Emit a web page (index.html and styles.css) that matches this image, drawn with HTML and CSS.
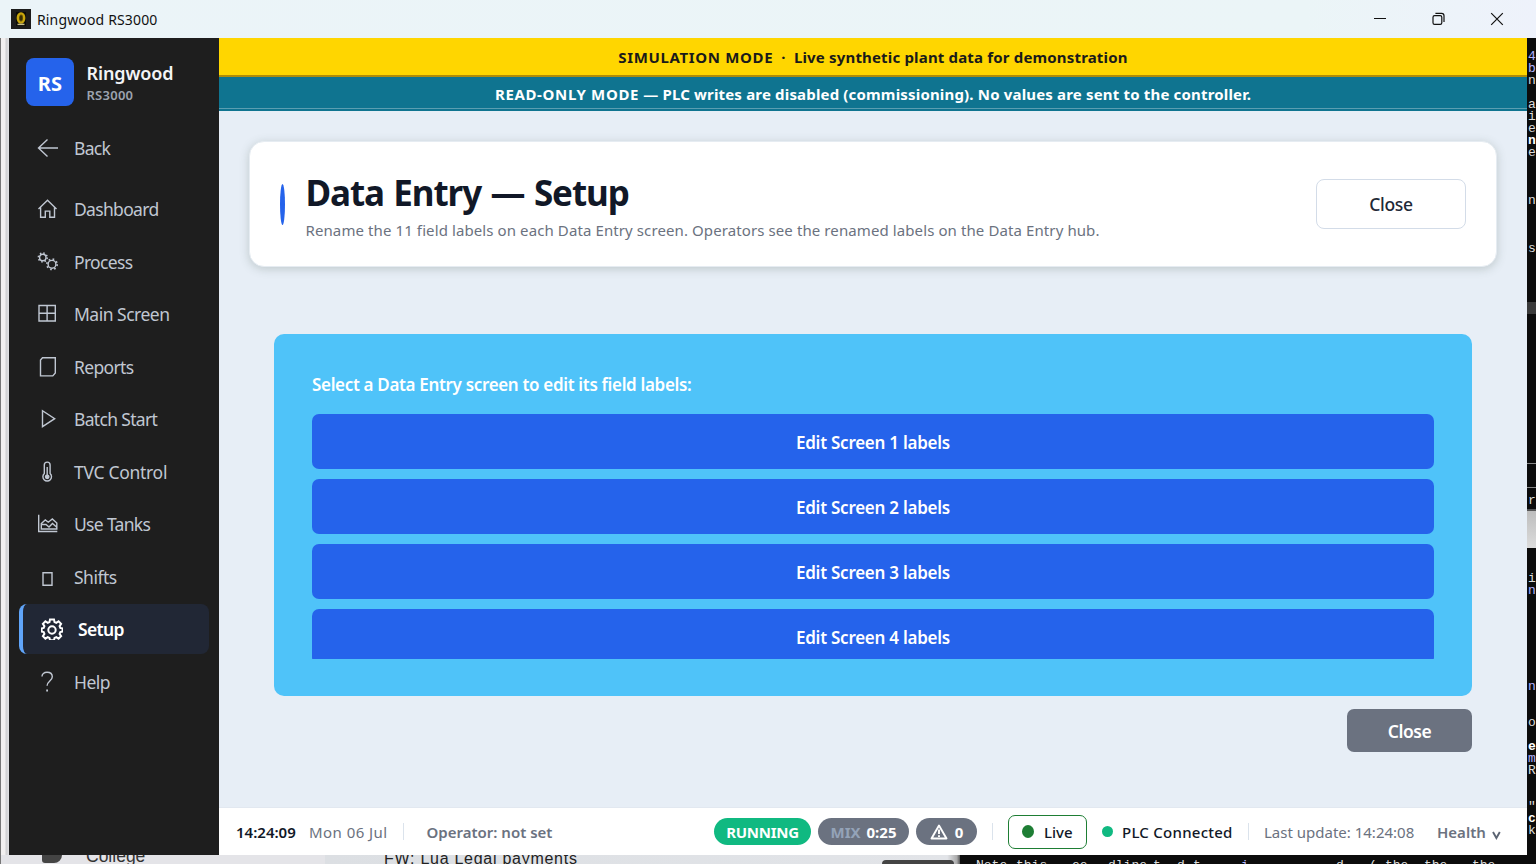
FILE: index.html
```
<!DOCTYPE html>
<html lang="en">
<head>
<meta charset="utf-8">
<title>Ringwood RS3000</title>
<link rel="stylesheet" href="styles.css">
</head>
<body>
<div class="screen">
  <header class="titlebar">
    <svg class="app-icon" width="20" height="20" viewBox="0 0 20 20"><rect width="20" height="20" fill="#1c1c1c"/><rect x="5" y="3" width="10" height="14" fill="#0c0c08"/><ellipse cx="10" cy="9" rx="3.2" ry="4.600" fill="#5a4a06" stroke="#c9a60c" stroke-width="2.400"/><path d="M10 7v4" stroke="#2c2404" stroke-width="1.400"/><path d="M6.500 15.400h7" stroke="#c9c08a" stroke-width="1.400"/></svg>
    <span class="app-title">Ringwood RS3000</span>
    <div class="window-buttons">
      <svg width="14" height="14" viewBox="0 0 14 14"><path d="M1 6.500h12" stroke="#111" fill="none"/></svg>
      <svg width="14" height="14" viewBox="0 0 14 14" fill="none" stroke="#111" stroke-width="1.200"><rect x="1" y="3.600" width="8.800" height="8.800" rx="1.600"/><path d="M3.400 1.400h6.200a2.400 2.400 0 0 1 2.400 2.400V10"/></svg>
      <svg width="14" height="14" viewBox="0 0 14 14"><path d="M1.200 1.200l11.600 11.600M12.800 1.200L1.200 12.800" stroke="#111" stroke-width="1.200" fill="none"/></svg>
    </div>
  </header>

  <div class="edge-left"></div>

  <div class="window">
    <aside class="sidebar">
      <div class="brand">
        <div class="logo">RS</div>
        <div class="brand-text"><div class="brand-name">Ringwood</div><div class="brand-model">RS3000</div></div>
      </div>
      <nav class="nav">
        <a class="item back"><svg viewBox="0 0 22 22"><path d="M21 11H1.500M10.500 2.500L1.500 11l9 8.500"/></svg><span class="tight">Back</span></a>
        <a class="item"><svg viewBox="0 0 22 22"><path d="M1.500 11L10.500 2.300 19.500 11M3.600 9.500v9.800h4.700v-6.200h4.500v6.200h4.700V9.500"/></svg><span class="tight">Dashboard</span></a>
        <a class="item"><svg viewBox="0 0 22 22"><circle cx="5.800" cy="6.500" r="3.200"/><circle cx="5.800" cy="6.500" r="4.400" stroke-width="1.600" stroke-dasharray="1.450 2"/><circle cx="15" cy="13.300" r="3.900"/><circle cx="15" cy="13.300" r="5.200" stroke-width="1.600" stroke-dasharray="1.700 2.380"/></svg><span class="tight">Process</span></a>
        <a class="item"><svg viewBox="0 0 22 22"><path d="M2 2.500h16.300v15.500H2zM10.100 2.500V18M2 10.200h16.300"/></svg><span class="medium">Main Screen</span></a>
        <a class="item"><svg viewBox="0 0 22 22"><path d="M5.500 1.700h12.800v15.200l-2.500 3H3.500V4z"/></svg><span class="tight">Reports</span></a>
        <a class="item"><svg viewBox="0 0 22 22"><path d="M5.500 2.700v16L17.700 10.700z"/></svg><span class="tight">Batch Start</span></a>
        <a class="item"><svg viewBox="0 0 22 22"><path d="M7.300 12.500V4a2.900 2.900 0 0 1 5.800 0v8.500a4.300 4.300 0 1 1-5.800 0z"/><path d="M10.200 6v8"/><circle cx="10.200" cy="15.800" r="1.700" fill="currentColor"/></svg><span class="loose">TVC Control</span></a>
        <a class="item"><svg viewBox="0 0 22 22"><path d="M1.700 1.700v16.800h18.600M4.300 16h15.500V10l-4.500-4-4 3.200-3-2.200-4 3.500zM4.500 11.500l4.500 0 3 2.500 3.500-3.500 4 3.500"/></svg><span class="tight">Use Tanks</span></a>
        <a class="item"><svg viewBox="0 0 22 22"><path d="M6 6.800h9v12.500H6z"/></svg><span class="medium">Shifts</span></a>
        <a class="item active"><svg viewBox="0 0 22 22"><path d="M9 1.400h4l.5 2.700 1.800.8 2.300-1.600 2.500 2.600-1.500 2.300.7 1.700 2.300.5v3.200l-2.300.5-.7 1.800 1.500 2.300-2.500 2.500-2.300-1.500-1.800.7-.5 2.300H9l-.5-2.300-1.800-.7-2.300 1.500-2.500-2.500 1.500-2.300-.7-1.800-2-.5v-3.200l2-.5.7-1.700L1.900 5.900l2.500-2.600 2.300 1.600 1.800-.8z"/><circle cx="11" cy="12" r="3.700"/></svg><span class="tight">Setup</span></a>
        <a class="item"><svg viewBox="0 0 22 22"><path d="M5 5.500C5 3 7 1.300 10 1.300s5.300 1.700 5.300 4.500c0 4.200-5.200 4.400-5.200 9"/><path d="M10.100 18.600v2" stroke-width="1.800"/></svg><span class="medium">Help</span></a>
      </nav>
    </aside>

    <main class="main">
      <div class="banner simulation"><span class="mode">SIMULATION MODE</span><span> &nbsp;·&nbsp; Live synthetic plant data for demonstration</span></div>
      <div class="banner readonly"><span class="mode">READ-ONLY MODE</span><span> — PLC writes are disabled (commissioning). No values are sent to the controller.</span></div>

      <section class="page">
        <div class="card">
          <div class="accent"></div>
          <div class="heading">
            <h1>Data Entry — Setup</h1>
            <p>Rename the 11 field labels on each Data Entry screen. Operators see the renamed labels on the Data Entry hub.</p>
          </div>
          <button class="close-light">Close</button>
        </div>
        <div class="panel">
          <div class="prompt"><span>Select a Data Entry screen to edit its field labels:</span></div>
          <div class="list">
            <button class="edit"><span>Edit Screen 1 labels</span></button>
            <button class="edit"><span>Edit Screen 2 labels</span></button>
            <button class="edit"><span>Edit Screen 3 labels</span></button>
            <button class="edit"><span>Edit Screen 4 labels</span></button>
          </div>
        </div>
        <button class="close-dark">Close</button>
      </section>

      <footer class="status">
        <span class="clock">14:24:09</span>
        <span class="date">Mon 06 Jul</span>
        <i class="sep sep-a"></i>
        <span class="operator">Operator: not set</span>
        <div class="right">
          <span class="pill running">RUNNING</span>
          <span class="pill mix"><em>MIX</em> 0:25</span>
          <span class="pill alarm"><svg width="18" height="16" viewBox="0 0 18 16" fill="none" stroke="#fff" stroke-width="1.900"><path d="M9 1.500L16.500 14.500h-15z" stroke-linejoin="round"/><path d="M9 5.500v4.500M9 11.300v1.700"/></svg>0</span>
          <i class="sep sep-b"></i>
          <span class="live"><i class="dot"></i>Live</span>
          <i class="dot plc-dot"></i>
          <span class="plc">PLC Connected</span>
          <i class="sep sep-c"></i>
          <span class="update">Last update: 14:24:08</span>
          <span class="health">Health</span>
          <svg class="chev" width="9" height="9" viewBox="0 0 9 9"><path d="M1 1l3.400 6L7.800 1" fill="none" stroke="#5b6472" stroke-width="1.900"/></svg>
        </div>
      </footer>
    </main>
  </div>

  <div class="edge-right">
    <b class="blue" style="top:50px">4</b><b class="blue" style="top:62px">b</b><b style="top:74px">n</b><b style="top:98px">a</b><b style="top:110px">i</b><b style="top:122px">e</b><b class="white" style="top:134px">n</b><b style="top:146px">e</b><b style="top:194px">n</b><b style="top:242px">s</b>
    <i class="block"></i><i class="rule" style="top:463px"></i><i class="rule" style="top:487px"></i><b style="top:494px">r</b><i class="light"></i>
    <b style="top:572px">i</b><b class="blue" style="top:584px">n</b><b class="blue" style="top:680px">n</b><b style="top:716px">o</b><b class="white" style="top:740px">e</b><b class="blue" style="top:752px">m</b><b style="top:764px">R</b><b style="top:800px">"</b><b class="white" style="top:812px">c</b><b style="top:824px">k</b>
  </div>

  <div class="desk">
    <div class="mail-nav"><i class="folder"></i><span>College</span></div>
    <div class="mail-list"><span>FW: Lua Legal payments</span><i class="tab"></i></div>
    <div class="terminal"><span style="left:16px">Note</span><span style="left:56px">this</span><span style="left:112px">ee</span><span style="left:148px">dline</span><span style="left:193px">t</span><span style="left:217px">d</span><span style="left:233px">t</span><span class="blue" style="left:281px">i</span><span style="left:376px">d</span><span style="left:409px">(</span><span style="left:425px">the</span><span style="left:464px">the</span><span style="left:512px">the</span></div>
  </div>
</div>
</body>
</html>
```
FILE: styles.css
```
* { box-sizing: border-box; }
body { margin: 0; font-family: "Noto Sans", "Open Sans", sans-serif; overflow: hidden; }
button { font-family: inherit; padding: 0; margin: 0; }
span, h1, p { white-space: nowrap; }
.screen { width: 1536px; height: 864px; display: grid; grid-template-columns: 9px 1518px 9px; grid-template-rows: 38px 817px 9px; overflow: hidden; background: #0c0c0c; }

.titlebar { grid-column: 1 / 4; display: flex; align-items: center; padding: 0 25px 0 11px; background: linear-gradient(90deg, #ebf4f8, #ebf5f7 85%, #eef2fb); }
.app-title { font-size: 14px; color: #111; margin-left: 6px; letter-spacing: 0.15px; }
.window-buttons { margin-left: auto; display: flex; gap: 44.500px; padding-right: 7px; }

.edge-left { background: linear-gradient(90deg, #777 0 1px, #f2f0f0 1px 5px, #cfcfd1 6px, #e2e2e4 9px); }
.window { display: grid; grid-template-columns: 210px 1fr; }

.sidebar { background: #1e1e1e; padding: 20px 10px 0; }
.brand { display: flex; align-items: center; gap: 12.500px; padding-left: 7px; height: 48px; }
.logo { width: 48px; height: 48px; border-radius: 8px; background: #2563eb; color: #fff; font-weight: 700; font-size: 20px; line-height: 52px; text-align: center; letter-spacing: 0.2px; }
.brand-text { padding-top: 3px; }
.brand-name { color: #f3f4f6; font-size: 18px; font-weight: 600; line-height: 22px; letter-spacing: -0.1px; }
.brand-model { color: #9ca3af; font-size: 13px; font-weight: 600; line-height: 22px; letter-spacing: 0.25px; }
.nav { display: flex; flex-direction: column; gap: 2.500px; padding-top: 17px; }
.item { display: flex; align-items: center; height: 50px; padding-left: 18px; gap: 15px; border-radius: 8px; color: #c0c7d2; font-size: 17.500px; }
.item svg { width: 22px; height: 22px; flex: none; fill: none; stroke: currentColor; stroke-width: 1.400; }
.tight { letter-spacing: -0.67px; }
.medium { letter-spacing: -0.5px; }
.loose { letter-spacing: -0.3px; }
.back { margin-bottom: 8.500px; }
.active { background: #212735; border-left: 4px solid #60a5fa; color: #fff; font-weight: 600; }
.active svg { stroke-width: 2; }

.main { display: flex; flex-direction: column; background: #e7eef6; }
.banner { text-align: center; font-weight: 700; font-size: 15px; letter-spacing: 0.17px; }
.mode { letter-spacing: 0.65px; }
.simulation { height: 39px; line-height: 39px; background: #ffd600; color: #1a1a1a; border-bottom: 2px solid #b08c08; }
.readonly { height: 34px; line-height: 35px; background: linear-gradient(#0f7490 0 31px, #5a9eb1 31px 32px, #0f7490 32px); color: #fff; }

.page { flex: 1; display: flex; flex-direction: column; align-items: stretch; padding: 30px 30px 0; }
.card { display: flex; align-items: center; height: 126px; border-radius: 15px; background: #fff; border: 1px solid #e6ecf2; padding: 0 30px; box-shadow: 0 2px 10px rgba(70, 90, 80, .25); }
.accent { width: 5px; height: 41px; border-radius: 50%; background: #2563eb; }
.heading { margin-left: 20.500px; padding-top: 3px; }
h1 { margin: 0; font-size: 35px; line-height: 44px; font-weight: 700; color: #111827; letter-spacing: -1.1px; word-spacing: 1.500px; }
p { margin: 4px 0 0; font-size: 15px; line-height: 22px; color: #6b7280; letter-spacing: 0.1px; }
.close-light { margin-left: auto; width: 150px; height: 50px; border: 1px solid #d3dce8; border-radius: 8px; background: #fff; color: #1f2937; font-size: 17.500px; font-weight: 500; letter-spacing: -0.3px; }
.panel { height: 362px; margin: 67px 25px 0; padding: 37px 38px; border-radius: 10px; background: #4fc3f9; }
.prompt { height: 43px; line-height: 27px; color: #fff; font-size: 17px; font-weight: 600; letter-spacing: -0.33px; }
.list { height: 245px; overflow: hidden; display: flex; flex-direction: column; gap: 10px; }
.edit { flex: none; height: 55px; border: 0; border-radius: 7px; background: #2563eb; color: #fff; font-size: 17px; font-weight: 600; letter-spacing: -0.25px; padding-top: 2px; }
.close-dark { align-self: flex-end; width: 125px; height: 43px; margin: 13px 25px 0; border: 0; border-radius: 7px; background: #6b7280; color: #fff; font-size: 17.500px; font-weight: 600; letter-spacing: -0.5px; }

.status { height: 48px; display: flex; align-items: center; background: #fff; border-top: 1px solid #e2e8f0; padding-left: 17px; font-size: 15px; color: #6b7280; }
.clock { width: 73px; color: #111827; font-weight: 600; }
.date { width: 94px; letter-spacing: 0.45px; }
.sep { display: block; width: 1px; height: 17px; background: #dbe3ec; }
.operator { margin-left: 22.500px; font-weight: 600; }
.right { margin-left: auto; width: 813px; display: flex; align-items: center; }
.pill { display: flex; align-items: center; justify-content: center; height: 27px; border-radius: 14px; color: #fff; font-weight: 700; }
.pill em { font-style: normal; color: #94a3b8; margin-right: 6px; }
.running { width: 97px; background: #10b981; letter-spacing: -0.25px; }
.mix { width: 91px; margin-left: 7px; background: #6b7280; }
.alarm { width: 61px; margin-left: 7px; background: #6b7280; gap: 7px; }
.sep-b { margin-left: 15px; }
.live { width: 79px; height: 34px; margin-left: 15px; border: 1px solid #1e7e34; border-radius: 7px; display: flex; align-items: center; padding-left: 13px; color: #111827; font-weight: 500; }
.dot { display: block; width: 12px; height: 13px; border-radius: 50%; background: #1e7e34; margin-right: 10px; }
.plc-dot { width: 11px; height: 11px; margin: 0 9px 0 15px; background: #10b981; }
.plc { color: #111827; font-weight: 500; width: 126px; letter-spacing: 0.25px; }
.update { margin-left: 15px; width: 173px; }
.health { font-weight: 600; width: 55px; }
.chev { margin-top: 8px; }

.edge-right { position: relative; overflow: hidden; background: #0c0c0c; margin-top: -38px; padding-top: 38px; clip-path: inset(38px 0 0 0); }
.edge-right b { position: absolute; left: 1px; font: 400 13px/14px "Liberation Mono", monospace; color: #ddd; }
.edge-right .blue, .terminal .blue { color: #b4b4ff; }
.edge-right .white { color: #fff; font-weight: 700; }
.edge-right i { position: absolute; left: 0; width: 9px; }
.block { top: 302px; height: 12px; background: #3a3a3a; }
.rule { height: 1px; background: #888; }
.light { top: 509px; height: 39px; background: linear-gradient(#555 0 2px, #bdbdbd 2px, #dcdcdc); }

.desk { grid-column: 1 / 4; display: grid; grid-template-columns: 325px 635px 1fr; height: 9px; overflow: hidden; }
.mail-nav { display: flex; overflow: hidden; background: linear-gradient(90deg, #777 0 1px, #e4e4e8 1px); padding-left: 42px; height: 9px; }
.folder { width: 20px; height: 8px; background: #444; border-radius: 0 0 8px 3px; }
.mail-nav span { margin: -9px 0 0 24px; font: 17.500px/20px "Liberation Sans", sans-serif; color: #333; }
.mail-list { display: flex; overflow: hidden; height: 9px; background: linear-gradient(90deg, #dcdfe3, #e2e4e8 98%, #aaa 99.500%, #555); padding-left: 59px; }
.mail-list span { width: 498px; margin-top: -6px; font: 16px/20px "Liberation Sans", sans-serif; letter-spacing: 0.73px; color: #222; }
.tab { width: 72px; height: 9px; margin-top: 5px; border-radius: 4px 4px 0 0; background: #444; }
.terminal { position: relative; overflow: hidden; height: 9px; background: #0c0c0c; }
.terminal span { position: absolute; top: 4px; font: 400 13px/14px "Liberation Mono", monospace; color: #ddd; }
```
